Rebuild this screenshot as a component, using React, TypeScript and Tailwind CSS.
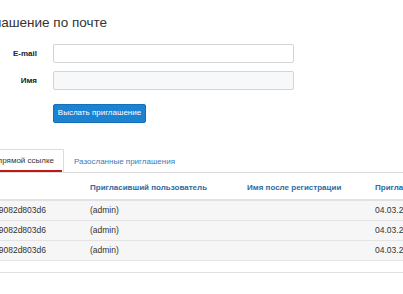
import React from 'react';

const rows = [
  { hash: 'a41f7c29082d803d6', by: '(admin)', date: '04.03.2015' },
  { hash: 'a41f7c29082d803d6', by: '(admin)', date: '04.03.2015' },
  { hash: 'a41f7c29082d803d6', by: '(admin)', date: '04.03.2015' },
];

export default function App() {
  return (
    <div
      className="w-[403px] h-[294px] overflow-hidden bg-white text-[#333]"
      style={{ fontFamily: '"Liberation Sans", Arial, sans-serif' }}
    >
      <h3 className="-ml-[36px] pt-[13px] h-[33px] text-[13.5px] leading-[20px] whitespace-nowrap">
        Приглашение по почте
      </h3>

      <div className="mt-[11px] flex flex-col gap-[8px]">
        <div className="flex items-center h-[19px]">
          <label className="w-[37px] shrink-0 text-right text-[8px] font-bold text-[#222]">E-mail</label>
          <input className="ml-[16px] w-[241px] h-[19px] rounded-[2px] border border-[#d4d4d4] bg-white outline-none" />
        </div>
        <div className="flex items-center h-[19px]">
          <label className="w-[37px] shrink-0 text-right text-[8px] font-bold text-[#222]">Имя</label>
          <input className="ml-[16px] w-[241px] h-[19px] rounded-[2px] border border-[#d4d4d4] bg-[#f7f8fa] outline-none" />
        </div>
        <div className="pl-[53px]">
          <button className="w-[93px] h-[19px] rounded-[2px] border border-[#1570b8] bg-[#1c82d2] text-white text-[8px] leading-none">
            Выслать приглашение
          </button>
        </div>
      </div>

      <div className="mt-[27px] flex items-end border-b border-[#dcdcdc] h-[23px]">
        <div className="relative flex shrink-0 justify-end w-[64px] h-[23px] overflow-hidden border-t border-r border-[#dcdcdc] bg-white">
          <span className="whitespace-nowrap text-[8px] leading-[21px] pr-[9px] text-[#333]">
            Приглашения по прямой ссылке
          </span>
          <div className="absolute left-0 right-[1px] bottom-0 h-[2px] bg-[#c01818]" />
        </div>
        <span className="ml-[10px] whitespace-nowrap text-[8px] leading-[21px] text-[#3a7bb8]">
          Разосланные приглашения
        </span>
      </div>

      <div className="mt-[4px]">
        <div className="flex items-center h-[24px] border-b-2 border-[#e2e2e2] text-[8px] font-bold text-[#2f6a9f] whitespace-nowrap">
          <div className="w-[90px] shrink-0" />
          <div className="w-[157px] shrink-0">Пригласивший пользователь</div>
          <div className="w-[128px] shrink-0">Имя после регистрации</div>
          <div className="shrink-0">Пригласил</div>
        </div>
        {rows.map((r, i) => (
          <div
            key={i}
            className="flex items-center h-[20px] border-b border-[#e4e4e4] bg-[#f6f6f6] text-[8.5px] text-[#333] whitespace-nowrap"
          >
            <div className="w-[90px] shrink-0 flex justify-end overflow-hidden pr-[44px]">
              <span>{r.hash}</span>
            </div>
            <div className="w-[157px] shrink-0">{r.by}</div>
            <div className="w-[128px] shrink-0" />
            <div className="shrink-0">{r.date}</div>
          </div>
        ))}
        <div className="mt-[11px] border-t border-[#e0e0e0]" />
      </div>
    </div>
  );
}
